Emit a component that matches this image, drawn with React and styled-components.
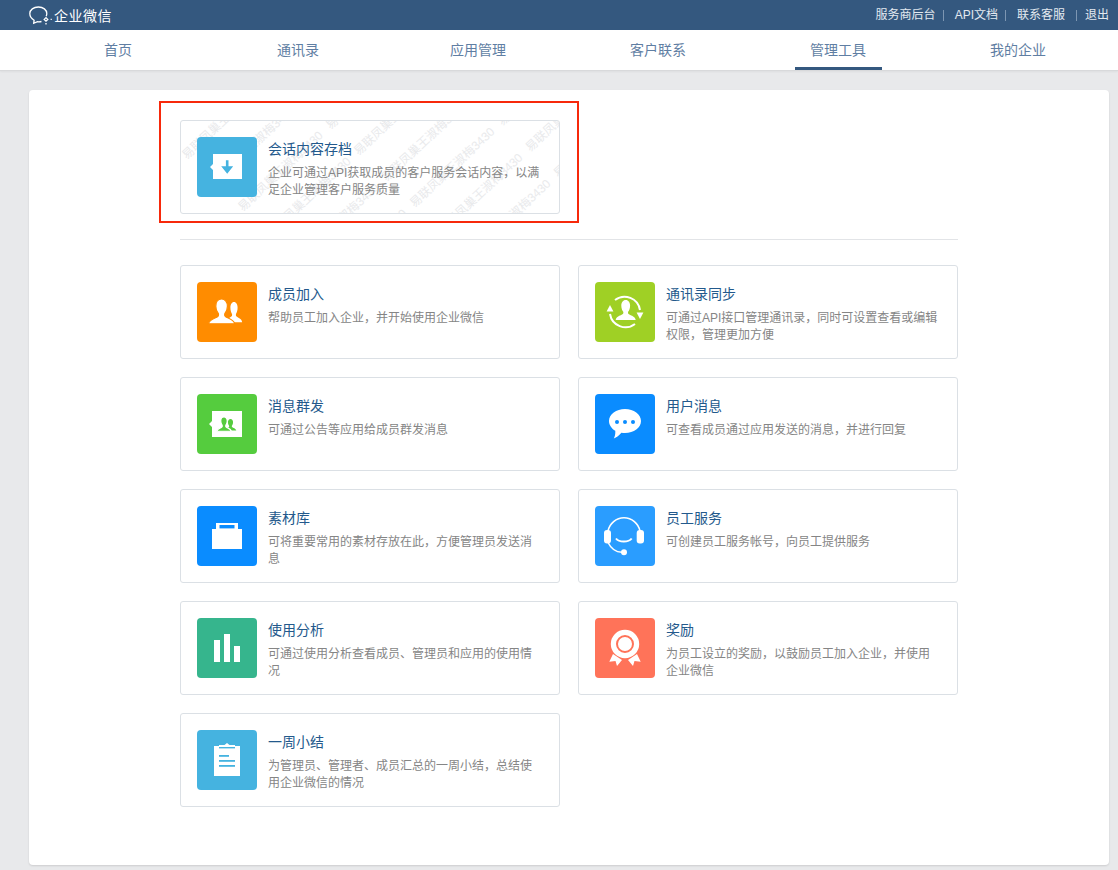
import React from 'react';
import styled, { createGlobalStyle } from 'styled-components';

const GlobalStyle = createGlobalStyle`
  html, body { margin: 0; padding: 0; background: #e8e9eb; }
  body { font-family: "Liberation Sans", "Noto Sans CJK SC", sans-serif; height: 870px; overflow: hidden; }
  * { box-sizing: border-box; }
`;

const TopBar = styled.header`
  height: 30px;
  background: #34587f;
  display: flex;
  align-items: center;
  justify-content: space-between;
  padding: 0 9px 0 28px;
`;

const Logo = styled.div`
  display: flex;
  align-items: center;
  gap: 1px;
  color: #fff;
  font-size: 14px;
  letter-spacing: 0.5px;
`;

const TopLinks = styled.div`
  display: flex;
  align-items: center;
  font-size: 12px;
  color: #e3e9f0;
`;

const TopLink = styled.a`
  padding-right: ${p => p.$pad}px;
  margin-right: ${p => p.$gap}px;
  position: relative;
  line-height: 12px;
  &::after {
    content: '';
    display: ${p => (p.$last ? 'none' : 'block')};
    position: absolute;
    right: 0;
    top: 1px;
    height: 11px;
    width: 1px;
    background: #7d96b2;
  }
`;

const Nav = styled.nav`
  height: 41px;
  background: #fff;
  display: flex;
  padding-left: 28px;
  border-bottom: 1px solid #d8d9db;
  box-shadow: 0 1px 2px rgba(0, 0, 0, 0.05);
`;

const NavItem = styled.div`
  width: 180px;
  height: 40px;
  display: flex;
  justify-content: center;
`;

const NavLabel = styled.span`
  height: 40px;
  padding: 0 15.5px;
  line-height: 40px;
  font-size: 14px;
  color: #5f7ea3;
  border-bottom: 3px solid ${p => (p.$active ? '#34587f' : 'transparent')};
`;

const Panel = styled.main`
  width: 1080px;
  height: 775px;
  margin: 19px 0 0 29px;
  background: #fff;
  border-radius: 4px;
  box-shadow: 0 1px 2px rgba(0, 0, 0, 0.12);
  padding: 11px 0 0 130px;
`;

const Highlight = styled.div`
  width: 420px;
  height: 122px;
  border: 2px solid #f7290b;
  padding: 17px 0 0 19px;
`;

const Divider = styled.hr`
  width: 778px;
  height: 1px;
  margin: 16px 0 25px 21px;
  border: 0;
  background: #e2e4e7;
`;

const Grid = styled.div`
  width: 778px;
  margin-left: 21px;
  display: grid;
  grid-template-columns: 380px 380px;
  grid-auto-rows: 94px;
  column-gap: 18px;
  row-gap: 18px;
`;

const Card = styled.div`
  position: relative;
  width: 380px;
  height: 94px;
  border: 1px solid #dbe0e5;
  border-radius: 3px;
  padding: 16px 16px 0;
  display: flex;
  gap: 11px;
  overflow: hidden;
  background: #fff;
`;

const IconTile = styled.div`
  flex: 0 0 60px;
  width: 60px;
  height: 60px;
  border-radius: 4px;
  background: ${p => p.$color};
  position: relative;
  z-index: 1;
  svg { display: block; }
`;

const CardText = styled.div`
  min-width: 0;
  padding-top: 2px;
  position: relative;
  z-index: 1;
`;

const CardTitle = styled.div`
  font-size: 14px;
  line-height: 20px;
  color: #23598c;
`;

const CardDesc = styled.div`
  font-size: 12px;
  line-height: 17px;
  color: #858585;
  margin-top: 6px;
`;

const WatermarkLayer = styled.div`
  position: absolute;
  inset: 0;
  overflow: hidden;
`;

const WatermarkLine = styled.div`
  position: absolute;
  display: flex;
  transform: rotate(-43deg);
  transform-origin: left center;
`;

const WatermarkText = styled.span`
  flex: 0 0 120px;
  white-space: nowrap;
  font-size: 12px;
  line-height: 14px;
  color: #e9eaec;
`;

// each diagonal passes through the end of a "3430", next line is offset by (28, 26)
const wmLines = [];
for (let n = -8; n <= 4; n++) {
  const ex = 319 + 28 * n;
  const ey = 2 + 26 * n;
  wmLines.push({ left: ex - 240 * Math.cos(Math.PI * 43 / 180), top: ey + 240 * Math.sin(Math.PI * 43 / 180) - 7 });
}

const Watermark = () => (
  <WatermarkLayer aria-hidden="true">
    {wmLines.map((l, i) => (
      <WatermarkLine key={i} style={{ left: l.left, top: l.top }}>
        <WatermarkText>易联凤巢王淑梅3430</WatermarkText>
        <WatermarkText>易联凤巢王淑梅3430</WatermarkText>
        <WatermarkText>易联凤巢王淑梅3430</WatermarkText>
        <WatermarkText>易联凤巢王淑梅3430</WatermarkText>
      </WatermarkLine>
    ))}
  </WatermarkLayer>
);

const Svg = ({ children }) => (
  <svg width="60" height="60" viewBox="0 0 60 60">{children}</svg>
);

// bust outline, top centre at 0,0, about 26 wide and 23 tall
const BUST = 'M0 0c3.600 0 5.800 2.800 5.800 6.600c0 3-1.200 5.400-2.600 7c-.4 1.600 0 2.600 1.600 3.200c3 1.400 7.400 2.400 8.400 6.200h-26.400c1-3.800 5.400-4.800 8.400-6.200c1.600-.6 2-1.600 1.600-3.200c-1.400-1.600-2.600-4-2.600-7c0-3.800 2.200-6.600 5.800-6.600z';

const Bust = ({ x, y, sx, sy, fill, edge }) => (
  <path
    d={BUST}
    fill={fill}
    stroke={edge || 'none'}
    strokeWidth={edge ? 1.2 : 0}
    vectorEffect="non-scaling-stroke"
    transform={`translate(${x} ${y}) scale(${sx} ${sy})`}
  />
);

const ArchiveIcon = () => (
  <Svg>
    <path d="M16 17h29v25H16v-9l-3-3 3-3z" fill="#fff" />
    <path d="M28.900 23.300h2.600v6h4.700L30.200 36.700l-6-7.400h4.700z" fill="#45b3e0" />
  </Svg>
);

const MembersIcon = () => (
  <Svg>
    <Bust x={37} y={20} sx={0.62} sy={0.88} fill="#fff" />
    <Bust x={24.600} y={17} sx={1} sy={1.08} fill="#fff" edge="#ff8c00" />
  </Svg>
);

const SyncIcon = () => (
  <Svg>
    <path d="M20 18A15.700 15.700 0 0 1 45 28" fill="none" stroke="#fff" strokeWidth="2" />
    <path d="M40 42A15.700 15.700 0 0 1 15 32" fill="none" stroke="#fff" strokeWidth="2" />
    <path d="M45 37l-3.400-6.500h6.800z" fill="#fff" />
    <path d="M15 23l3.400 6.500h-6.800z" fill="#fff" />
    <Bust x={30.700} y={18} sx={0.76} sy={0.87} fill="#fff" />
  </Svg>
);

const BroadcastIcon = () => (
  <Svg>
    <path d="M15 17h30v26H15v-10l-3-3 3-3z" fill="#fff" />
    <Bust x={33.500} y={25} sx={0.44} sy={0.5} fill="#55cc3e" />
    <Bust x={27} y={23} sx={0.56} sy={0.62} fill="#55cc3e" edge="#fff" />
  </Svg>
);

const ChatIcon = () => (
  <Svg>
    <path d="M30 15c8.800 0 16 5.400 16 12s-7.200 12-16 12c-1.200 0-2.500-.1-3.600-.3-2 2.300-4.900 4.800-7.600 5.800 1-1.900 1.700-4 1.500-7.700C16.600 34.600 14 31 14 27c0-6.600 7.200-12 16-12z" fill="#fff" />
    <circle cx="22" cy="28" r="2" fill="#0a8cff" />
    <circle cx="30" cy="28" r="2" fill="#0a8cff" />
    <circle cx="38" cy="28" r="2" fill="#0a8cff" />
  </Svg>
);

const BagIcon = () => (
  <Svg>
    <path d="M15 23h4v-6h22v6h4v20H15z" fill="#fff" />
    <rect x="22.500" y="19" width="15" height="3.400" fill="#0a8cff" />
  </Svg>
);

const HeadsetIcon = () => (
  <Svg>
    <path d="M13 25A16.300 16.300 0 0 1 45 25" fill="none" stroke="#fff" strokeWidth="1.600" />
    <rect x="9" y="24" width="7" height="13.500" rx="3" fill="#fff" />
    <rect x="41.700" y="24" width="7.300" height="13.500" rx="3" fill="#fff" />
    <path d="M13.300 37c2.500 5 7 9 13.500 9.300" fill="none" stroke="#fff" strokeWidth="1.600" />
    <circle cx="29" cy="46.300" r="3" fill="#fff" />
    <path d="M21 32.500c3 4 12.500 4 15.700 0" fill="none" stroke="#fff" strokeWidth="2" />
  </Svg>
);

const ChartIcon = () => (
  <Svg>
    <rect x="17" y="22" width="6" height="22" fill="#fff" />
    <rect x="27" y="16" width="6" height="28" fill="#fff" />
    <rect x="37" y="28" width="6" height="16" fill="#fff" />
  </Svg>
);

const AwardIcon = () => (
  <Svg>
    <path d="M18 36l9 6-5 6-1.500-5-6.200.7zM42 36l-9 6 5 6 1.500-5 6.200.7z" fill="#fff" />
    <circle cx="30" cy="26" r="14.200" fill="#fff" />
    <circle cx="30" cy="26" r="8" fill="none" stroke="#ff7359" strokeWidth="2" />
  </Svg>
);

const ClipboardIcon = () => (
  <Svg>
    <path d="M17 16h5v-1h5.500l2.500-2 2.500 2H38v1h5v30H17z" fill="#fff" />
    <rect x="22" y="17" width="16" height="1.400" fill="#45b3e0" />
    <rect x="22" y="25" width="10" height="1.800" fill="#45b3e0" />
    <rect x="22" y="30" width="16" height="1.800" fill="#45b3e0" />
    <rect x="22" y="35" width="16" height="1.800" fill="#45b3e0" />
  </Svg>
);

const cards = [
  { title: '成员加入', desc: '帮助员工加入企业，并开始使用企业微信', color: '#ff8c00', Icon: MembersIcon },
  { title: '通讯录同步', desc: '可通过API接口管理通讯录，同时可设置查看或编辑权限，管理更加方便', color: '#9fd025', Icon: SyncIcon },
  { title: '消息群发', desc: '可通过公告等应用给成员群发消息', color: '#55cc3e', Icon: BroadcastIcon },
  { title: '用户消息', desc: '可查看成员通过应用发送的消息，并进行回复', color: '#0a8cff', Icon: ChatIcon },
  { title: '素材库', desc: '可将重要常用的素材存放在此，方便管理员发送消息', color: '#0a8cff', Icon: BagIcon },
  { title: '员工服务', desc: '可创建员工服务帐号，向员工提供服务', color: '#2a9dff', Icon: HeadsetIcon },
  { title: '使用分析', desc: '可通过使用分析查看成员、管理员和应用的使用情况', color: '#36b58d', Icon: ChartIcon },
  { title: '奖励', desc: '为员工设立的奖励，以鼓励员工加入企业，并使用企业微信', color: '#ff7359', Icon: AwardIcon },
  { title: '一周小结', desc: '为管理员、管理者、成员汇总的一周小结，总结使用企业微信的情况', color: '#45b3e0', Icon: ClipboardIcon },
];

const navItems = ['首页', '通讯录', '应用管理', '客户联系', '管理工具', '我的企业'];

export default function App() {
  return (
    <>
      <GlobalStyle />
      <TopBar>
        <Logo>
          <svg width="25" height="24" viewBox="0 0 25 24" fill="none" stroke="#fff" strokeWidth="1.300">
            <path d="M13.500 18.500c-1.300.3-2.700.4-4 .2l-3.800 1.600.4-3C3.400 15.700 1.800 13.300 1.800 10.600 1.800 6.800 5.600 4 10.400 4c4.800 0 8.400 2.800 8.400 6.600 0 1-.2 1.900-.6 2.700" />
            <path d="M18 14.600l1.800 1.800-1.800 1.800-1.800-1.800zM22.600 16.400h1.200M18 20v1.600" />
          </svg>
          企业微信
        </Logo>
        <TopLinks>
          <TopLink $pad={8} $gap={11}>服务商后台</TopLink>
          <TopLink $pad={8} $gap={11}>API文档</TopLink>
          <TopLink $pad={12} $gap={8}>联系客服</TopLink>
          <TopLink $pad={0} $gap={0} $last>退出</TopLink>
        </TopLinks>
      </TopBar>
      <Nav>
        {navItems.map(n => (
          <NavItem key={n}>
            <NavLabel $active={n === '管理工具'}>{n}</NavLabel>
          </NavItem>
        ))}
      </Nav>
      <Panel>
        <Highlight>
          <Card>
            <Watermark />
            <IconTile $color="#45b3e0"><ArchiveIcon /></IconTile>
            <CardText>
              <CardTitle>会话内容存档</CardTitle>
              <CardDesc>企业可通过API获取成员的客户服务会话内容，以满足企业管理客户服务质量</CardDesc>
            </CardText>
          </Card>
        </Highlight>
        <Divider />
        <Grid>
          {cards.map(({ title, desc, color, Icon }) => (
            <Card key={title}>
              <IconTile $color={color}><Icon /></IconTile>
              <CardText>
                <CardTitle>{title}</CardTitle>
                <CardDesc>{desc}</CardDesc>
              </CardText>
            </Card>
          ))}
        </Grid>
      </Panel>
    </>
  );
}
